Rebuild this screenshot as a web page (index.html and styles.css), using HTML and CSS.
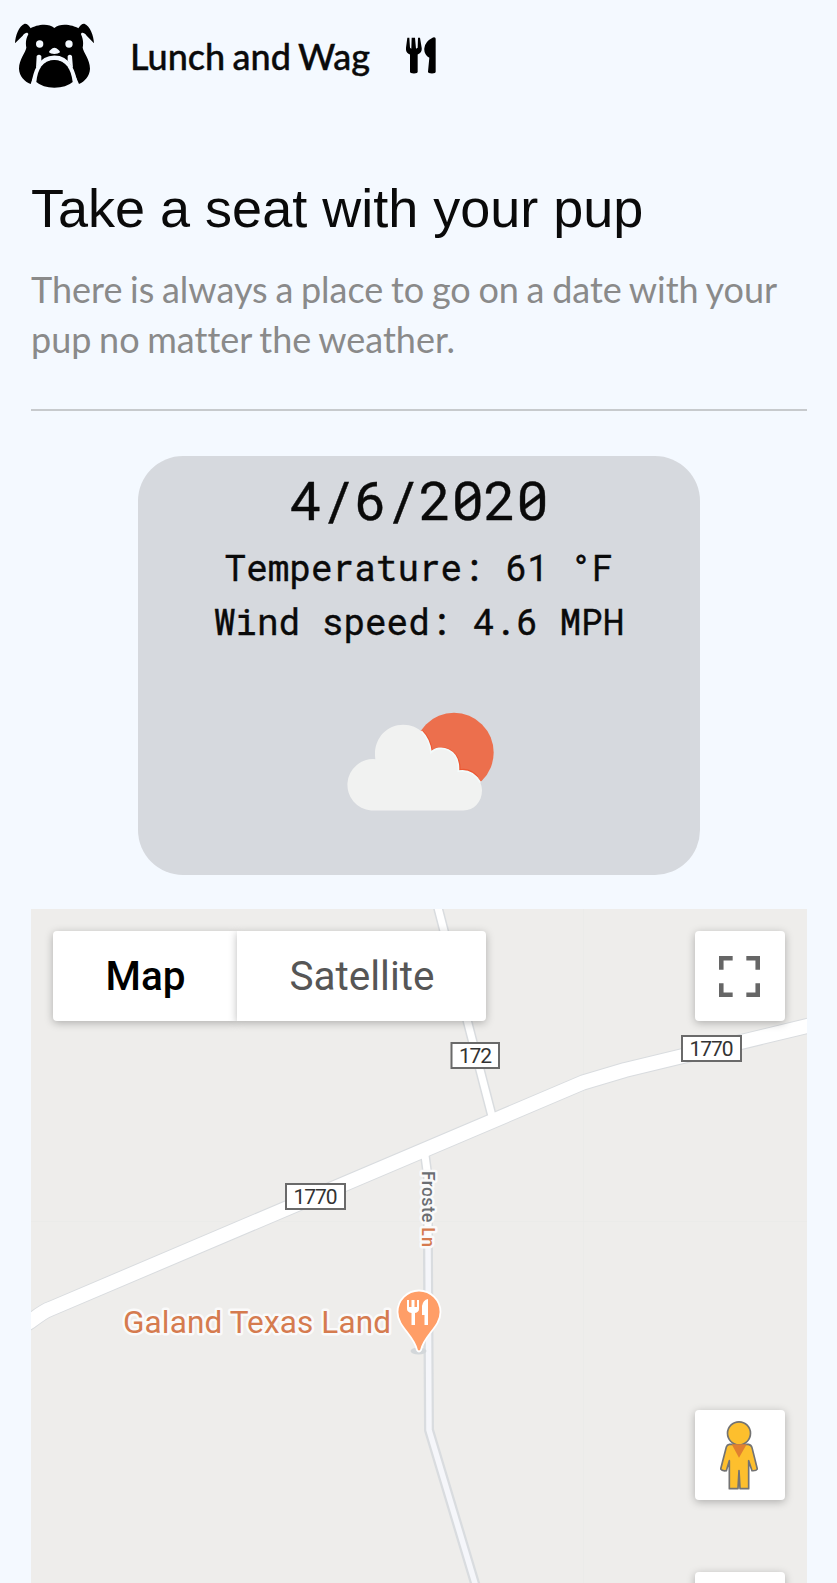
FILE: index.html
```html
<!DOCTYPE html>
<html lang="en">
<head>
<meta charset="utf-8">
<title>Lunch and Wag</title>
<link rel="stylesheet" href="styles.css">
</head>
<body>
<header class="topbar">
  <svg class="dog" viewBox="45 69 237 195" role="img" aria-label="Bulldog">
    <path d="M45 130C46 108 56 78 74 71Q84 70 92 85C106 76 144 67 163 84C182 67 221 76 235 85Q243 70 253 71C271 78 281 108 282 130L260 107C252 96 243 97 243 103C249 116 251 128 248 143C250 157 270 178 270 206C269 229 254 244 237 252L216 205H112L92 252C73 244 58 229 57 206C57 178 77 157 79 143C76 128 78 116 85 103C84 96 76 97 68 107Z"/>
    <g class="dog-cut">
      <circle cx="119" cy="132" r="11"/><circle cx="207" cy="132" r="11"/>
      <path d="M147 157Q147 152 152 149Q163 137 175 149Q180 152 180 157Q175 162 163 162Q151 162 147 157Z"/>
      <path class="dog-arch" d="M99 262C106 215 120 173.500 163 173.500C206 173.500 220 215 228 262"/>
      <path d="M110 168Q117 161 124 168V182L108 205ZM203 168Q210 161 216 168L219 205L203 182Z"/>
    </g>
    <path d="M109 246C113 207 128 181 163 180C198 181 213 207 218 246Q199 263 163 263Q128 263 109 246Z"/>
  </svg>
  <span class="brand">Lunch and Wag</span>
  <svg class="utensils" viewBox="498 112 90 110" role="img" aria-label="Fork and knife">
    <path d="M502 114H508L510 144L514 147L515 114H525L528 147L533 144L534 114H540L545 144Q547 157 533 164V216Q533 221 522 221Q510 221 510 216V164Q496 158 498 144ZM587 117V216Q587 221 576 221Q564 221 564 216L568 174Q551 163 553 145Q555 125 579 113Q587 111 587 117Z"/>
  </svg>
</header>
<main class="content">
  <h1 class="title">Take a seat with your pup</h1>
  <p class="lead">There is always a place to go on a date with your pup no matter the weather.</p>
  <hr class="rule">
  <section class="weather">
    <h2 class="date">4/6/2020</h2>
    <p class="reading">Temperature: 61 °F</p>
    <p class="reading">Wind speed: 4.6 MPH</p>
    <svg class="cloud" viewBox="80 66 444 296" role="img" aria-label="Partly cloudy">
      <circle cx="404" cy="187" r="119" fill="#ec6f4d"/>
      <path d="M307 124Q330 143 337 187C360 160 424 178 419 242Q450 234 474 262" fill="none" stroke="#ec5732" stroke-width="9"/>
      <path d="M155 361A76 76 0 1 1 168 207C160 151 198 104 252 104C299 104 331 139 335 187C359 160 422 175 417 243C452 236 488 263 488 301C488 335 464 361 432 361Z" fill="#f1f2f1"/>
      <path d="M306 123Q331 148 335 187C359 160 422 175 417 243Q459 236 483 277" fill="none" stroke="#f3fbfb" stroke-width="5"/>
    </svg>
  </section>
  <section class="map">
    <svg class="tiles" viewBox="31 909 776 674">
      <g fill="none" stroke-linejoin="round">
        <path d="M31 1221.500H807M583.500 909V1583" stroke="#e9e9e8" stroke-width=".7"/>
        <g stroke="#d9dcdf">
          <path d="M424 1148L428 1178L428 1260L429 1430L480 1600" stroke-width="10"/>
          <path d="M436 900L493 1120" stroke-width="10"/>
          <path d="M15 1331L31 1321Q44 1311 50 1309L583 1082.500L625 1070L807 1026L830 1020" stroke-width="16"/>
        </g>
        <path d="M428 1240L429 1430L480 1600" stroke="#f5f6fa" stroke-width="5.500"/>
        <path d="M424 1148L428 1178L428 1248M436 900L493 1120" stroke="#fff" stroke-width="7"/>
        <path d="M15 1331L31 1321Q44 1311 50 1309L583 1082.500L625 1070L807 1026L830 1020" stroke="#fff" stroke-width="14"/>
      </g>
      <g class="shield">
        <rect x="451.500" y="1043" width="47.500" height="25"/><text x="475.500" y="1062.500" textLength="33">172</text>
        <rect x="682" y="1036" width="59" height="25"/><text x="711.500" y="1055.500" textLength="44">1770</text>
        <rect x="286" y="1184" width="59" height="25"/><text x="315.500" y="1204" textLength="44">1770</text>
      </g>
      <text class="street" transform="translate(422 1171) rotate(90)" textLength="76">Froste <tspan class="ln">Ln</tspan></text>
      <text class="place" x="123" y="1332.500" textLength="268">Galand Texas Land</text>
      <ellipse cx="418.500" cy="1351" rx="8" ry="3.500" fill="#d3d7da"/>
      <path d="M397.500 1312A21.500 21.500 0 0 1 440.500 1312C440.500 1327 424 1335 421 1350Q419 1353 417 1350C414 1335 397.500 1327 397.500 1312Z" fill="#ff9e67" stroke="#fff" stroke-width="1.800"/>
      <path d="M407 1300H409V1307H411.500V1300H414.500V1307H417V1300H419V1309Q419 1312 415 1313V1325H411.500V1313Q407 1312 407 1309ZM428 1299V1325H424.500V1315H422V1306Q423 1300 428 1299Z" fill="#fff"/>
    </svg>
    <div class="controls">
      <div class="types">
        <button class="type active">Map</button><button class="type">Satellite</button>
      </div>
      <div class="tools">
        <button class="tool fullscreen" aria-label="Fullscreen">
          <svg width="41" height="41" viewBox="0 0 18 18"><path d="M0 0v6h2V2h4V0H0zm16 0h-4v2h4v4h2V0h-2zm0 16h-4v2h6v-6h-2v4zM2 12H0v6h6v-2H2v-4z" fill="#666"/></svg>
        </button>
        <button class="tool pegman" aria-label="Street View">
          <svg width="38" height="69" viewBox="179 93 114 207">
            <g fill="#fdbf2d" stroke="#737373" stroke-width="5" stroke-linejoin="round">
              <path d="M207 163H264Q273 165 275 173L291 237Q288 243 275 242L265 212V296H239L236 242L233 296H207V212L198 242Q185 244 181 237L198 171Q200 164 207 163Z"/>
              <circle cx="236" cy="130" r="34.500"/>
            </g>
            <path d="M214 163H259L236 203Z" fill="#e07f30"/>
          </svg>
        </button>
        <button class="tool zoom" aria-label="Zoom in"></button>
      </div>
    </div>
  </section>
</main>
</body>
</html>
```
FILE: styles.css
```css
* { box-sizing: border-box; }
html { overflow: hidden; }
body {
  margin: 0;
  height: 1583px;
  overflow: hidden;
  background: #f4f9ff;
  color: #0a0a0a;
  font-family: Lato, sans-serif;
}
.topbar {
  display: flex;
  align-items: flex-start;
  height: 180px;
  padding: 23px 0 0 15px;
}
.dog { width: 79px; height: 65px; }
.dog-cut { fill: #f4f9ff; }
.dog-arch { fill: none; stroke: #f4f9ff; stroke-width: 14px; }
.brand {
  margin: 11px 37px 0 36px;
  width: 239px;
  font-size: 36px;
  font-weight: 500;
  line-height: 44px;
  word-spacing: -1.7px;
  white-space: nowrap;
  -webkit-text-stroke: .4px #0a0a0a;
}
.utensils { width: 30px; height: 37px; margin-top: 14px; }
.content { padding: 0 30px 0 31px; }
.title {
  margin: 0;
  height: 84px;
  font: 400 54px/56px "Liberation Sans", sans-serif;
  white-space: nowrap;
}
.lead {
  margin: 0;
  height: 145px;
  color: #8a8a8a;
  font-size: 36px;
  line-height: 50px;
  word-spacing: -1.55px;
  font-variant-ligatures: none;
}
.rule { height: 2px; margin: 0; border: 0; background: #c7cacd; }
.weather {
  display: flex;
  flex-direction: column;
  align-items: center;
  width: 562px;
  height: 419px;
  margin: 45px auto 34px 107px;
  padding-top: 10px;
  border-radius: 45px;
  background: #d6d9de;
  font-family: "Roboto Mono", "DejaVu Sans Mono", monospace;
  -webkit-text-stroke: .4px #0a0a0a;
}
.date { margin: 0 0 8px; font-size: 54px; font-weight: 400; line-height: 66px; }
.reading { margin: 0; font-size: 36px; font-weight: 400; line-height: 54px; white-space: pre; }
.cloud { width: 148px; height: 99px; margin: 64px 0 0 2px; }
.map { display: grid; width: 776px; height: 674px; overflow: hidden; background: #eeedeb; }
.tiles, .controls { grid-area: 1 / 1; }
.tiles { width: 776px; height: 674px; font-family: Roboto, sans-serif; }
.shield rect { fill: #fff; stroke: #6a6a6a; stroke-width: 2; }
.shield text { fill: #333; font-size: 21px; text-anchor: middle; }
.street, .place { paint-order: stroke; stroke: #fafafa; stroke-width: 5px; stroke-linejoin: round; }
.street { font-size: 18px; font-weight: 500; fill: #6b6e72; }
.ln, .place { fill: #d57b4f; }
.place { font-size: 31.5px; }
.controls { display: flex; justify-content: space-between; z-index: 1; padding: 22px 22px 0; }
.types { display: flex; height: 90px; border-radius: 4px; }
.type, .tool {
  border: 0;
  background: #fff;
  box-shadow: 0 2px 8px rgba(0, 0, 0, .27);
}
.type {
  width: 249px;
  padding: 0 0 0 1px;
  color: #565656;
  font: 400 40.5px/90px Roboto, sans-serif;
  border-radius: 0 4px 4px 0;
}
.active { width: 184px; color: #000; font-weight: 500; border-radius: 4px 0 0 4px; }
.tools { display: flex; flex-direction: column; }
.tool {
  display: flex;
  flex: none;
  align-items: center;
  justify-content: center;
  width: 90px;
  height: 90px;
  padding: 0;
  border-radius: 4px;
}
.fullscreen { padding-right: 1px; }
.pegman { margin-top: 389px; padding-right: 3px; }
.zoom { margin-top: 72px; }
```
